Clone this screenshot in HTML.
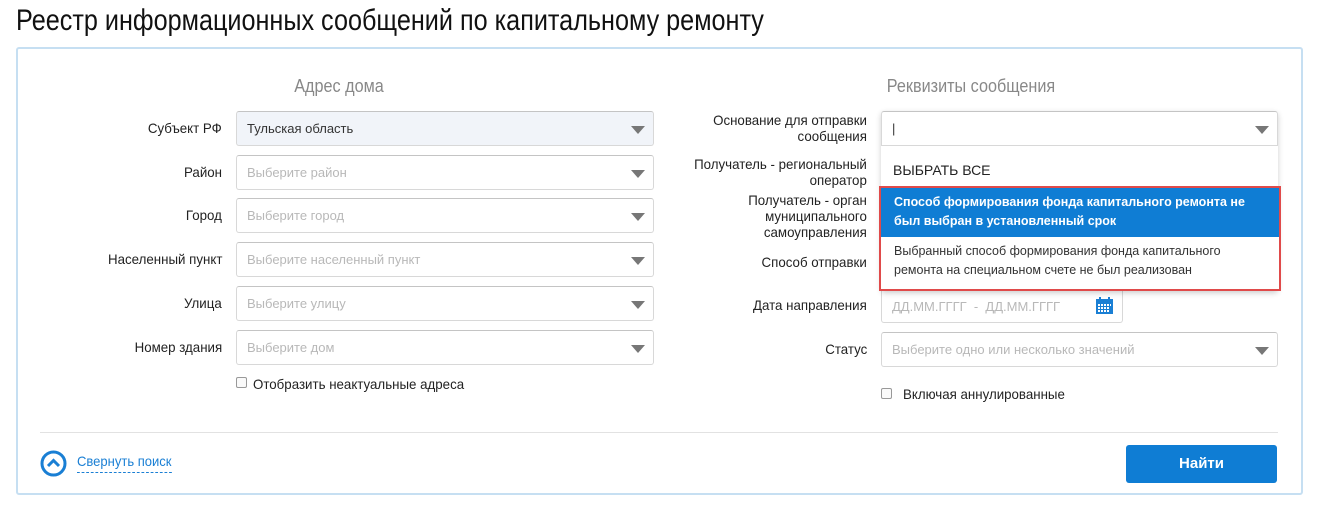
<!DOCTYPE html>
<html><head><meta charset="utf-8"><style>
*{box-sizing:border-box;margin:0;padding:0}
body{width:1319px;height:509px;background:#fff;font-family:"Liberation Sans",sans-serif;color:#222;position:relative;overflow:hidden}
.a{position:absolute}
.title{left:16px;top:4px;font-size:30px;white-space:nowrap;color:#111;transform:scaleX(0.84);transform-origin:left top}
.box{left:16px;top:47px;width:1287px;height:448px;border:2px solid #c6dff2;border-radius:3px}
.h{font-size:18px;color:#888;text-align:center;white-space:nowrap;transform:scaleX(0.9)}
.lbl{font-size:14px;text-align:right;line-height:16px;color:#222;white-space:nowrap;transform:scaleX(0.95);transform-origin:right top}
.inp{height:35px;border:1px solid #d8d8d8;border-top-color:#c4c4c4;border-radius:3px;background:#fff;font-size:13px;color:#b8b8b8;padding:0 10px;line-height:33px;white-space:nowrap;overflow:hidden}
.inp .ar{position:absolute;right:8px;top:14px;width:0;height:0;border-left:7px solid transparent;border-right:7px solid transparent;border-top:8px solid #777}
.cb{width:11px;height:11px;border:1px solid #999;border-radius:2px;background:#fafafa}
.cbt{font-size:14px;color:#222;white-space:nowrap;transform:scaleX(0.95);transform-origin:left top}
</style></head><body>
<div class="a title">Реестр информационных сообщений по капитальному ремонту</div>
<div class="a box"></div>
<div class="a h" style="left:236px;top:76px;width:206px">Адрес дома</div>
<div class="a h" style="left:871px;top:76px;width:200px">Реквизиты сообщения</div>

<div class="a lbl" style="right:1097px;top:120px">Субъект РФ</div>
<div class="a inp" style="left:236px;top:111px;width:418px;background:#f1f4f9;color:#333">Тульская область<span class="ar"></span></div>
<div class="a lbl" style="right:1097px;top:164px">Район</div>
<div class="a inp" style="left:236px;top:155px;width:418px">Выберите район<span class="ar"></span></div>
<div class="a lbl" style="right:1097px;top:207px">Город</div>
<div class="a inp" style="left:236px;top:198px;width:418px">Выберите город<span class="ar"></span></div>
<div class="a lbl" style="right:1097px;top:251px">Населенный пункт</div>
<div class="a inp" style="left:236px;top:242px;width:418px">Выберите населенный пункт<span class="ar"></span></div>
<div class="a lbl" style="right:1097px;top:295px">Улица</div>
<div class="a inp" style="left:236px;top:286px;width:418px">Выберите улицу<span class="ar"></span></div>
<div class="a lbl" style="right:1097px;top:339px">Номер здания</div>
<div class="a inp" style="left:236px;top:330px;width:418px">Выберите дом<span class="ar"></span></div>
<div class="a cb" style="left:236px;top:377px"></div>
<div class="a cbt" style="left:253px;top:376px">Отобразить неактуальные адреса</div>

<div class="a lbl" style="right:452px;top:112px">Основание для отправки<br>сообщения</div>
<div class="a lbl" style="right:452px;top:156px">Получатель - региональный<br>оператор</div>
<div class="a lbl" style="right:452px;top:192px">Получатель - орган<br>муниципального<br>самоуправления</div>
<div class="a lbl" style="right:452px;top:254px">Способ отправки</div>
<div class="a lbl" style="right:452px;top:297px">Дата направления</div>
<div class="a lbl" style="right:452px;top:341px">Статус</div>

<div class="a inp" style="left:881px;top:288px;width:242px;height:35px;padding-top:1px">ДД.ММ.ГГГГ &nbsp;- &nbsp;ДД.ММ.ГГГГ
<svg class="a" style="left:214px;top:8px" width="17" height="17" viewBox="0 0 17 17"><rect x="0" y="2" width="17" height="15" fill="#1a7fd4"/><rect x="3" y="0" width="2" height="4" fill="#1a7fd4"/><rect x="12" y="0" width="2" height="4" fill="#1a7fd4"/><g fill="#fff"><rect x="2" y="7" width="2" height="2"/><rect x="5" y="7" width="2" height="2"/><rect x="8" y="7" width="2" height="2"/><rect x="11" y="7" width="2" height="2"/><rect x="14" y="7" width="1" height="2"/><rect x="2" y="10" width="2" height="2"/><rect x="5" y="10" width="2" height="2"/><rect x="8" y="10" width="2" height="2"/><rect x="11" y="10" width="2" height="2"/><rect x="2" y="13" width="2" height="2"/><rect x="5" y="13" width="2" height="2"/><rect x="8" y="13" width="2" height="2"/><rect x="11" y="13" width="2" height="2"/></g></svg></div>
<div class="a inp" style="left:881px;top:332px;width:397px">Выберите одно или несколько значений<span class="ar"></span></div>
<div class="a cb" style="left:881px;top:388px"></div>
<div class="a cbt" style="left:903px;top:386px">Включая аннулированные</div>

<div class="a" style="left:881px;top:111px;width:397px;height:180px;box-shadow:0 2px 6px rgba(0,0,0,.2);background:#fff;border-radius:3px"></div>
<div class="a inp" style="left:881px;top:111px;width:397px;color:#333;border-radius:3px 3px 0 0">|<span class="ar"></span></div>
<div class="a" style="left:893px;top:162px;font-size:14px;color:#222">ВЫБРАТЬ ВСЕ</div>
<div class="a" style="left:879px;top:186px;width:402px;height:105px;border:2px solid #e04a4a;background:#fff"></div>
<div class="a" style="left:881px;top:188px;width:398px;height:49px;background:#0f7dd4;color:#fff;font-weight:bold;font-size:12.5px;line-height:19px;padding:5px 13px">Способ формирования фонда капитального ремонта не был выбран в установленный срок</div>
<div class="a" style="left:881px;top:237px;width:398px;height:52px;color:#333;font-size:12.5px;line-height:19px;padding:5px 13px">Выбранный способ формирования фонда капитального ремонта на специальном счете не был реализован</div>

<div class="a" style="left:40px;top:432px;width:1238px;height:1px;background:#e2e2e2"></div>
<svg class="a" style="left:40px;top:450px" width="27" height="27" viewBox="0 0 27 27"><circle cx="13.5" cy="13.5" r="11.5" fill="none" stroke="#1a7fd4" stroke-width="3"/><path d="M8 16 L13.5 10.5 L19 16" fill="none" stroke="#1a7fd4" stroke-width="3"/></svg>
<div class="a" style="left:77px;top:453px;font-size:14px;color:#1a7fd4;border-bottom:1px dashed #1a7fd4;padding-bottom:3px;transform:scaleX(0.93);transform-origin:left top">Свернуть поиск</div>
<div class="a" style="left:1126px;top:445px;width:151px;height:38px;background:#0f7dd4;border-radius:3px;color:#fff;font-size:15px;font-weight:bold;text-align:center;line-height:38px">Найти</div>
</body></html>
